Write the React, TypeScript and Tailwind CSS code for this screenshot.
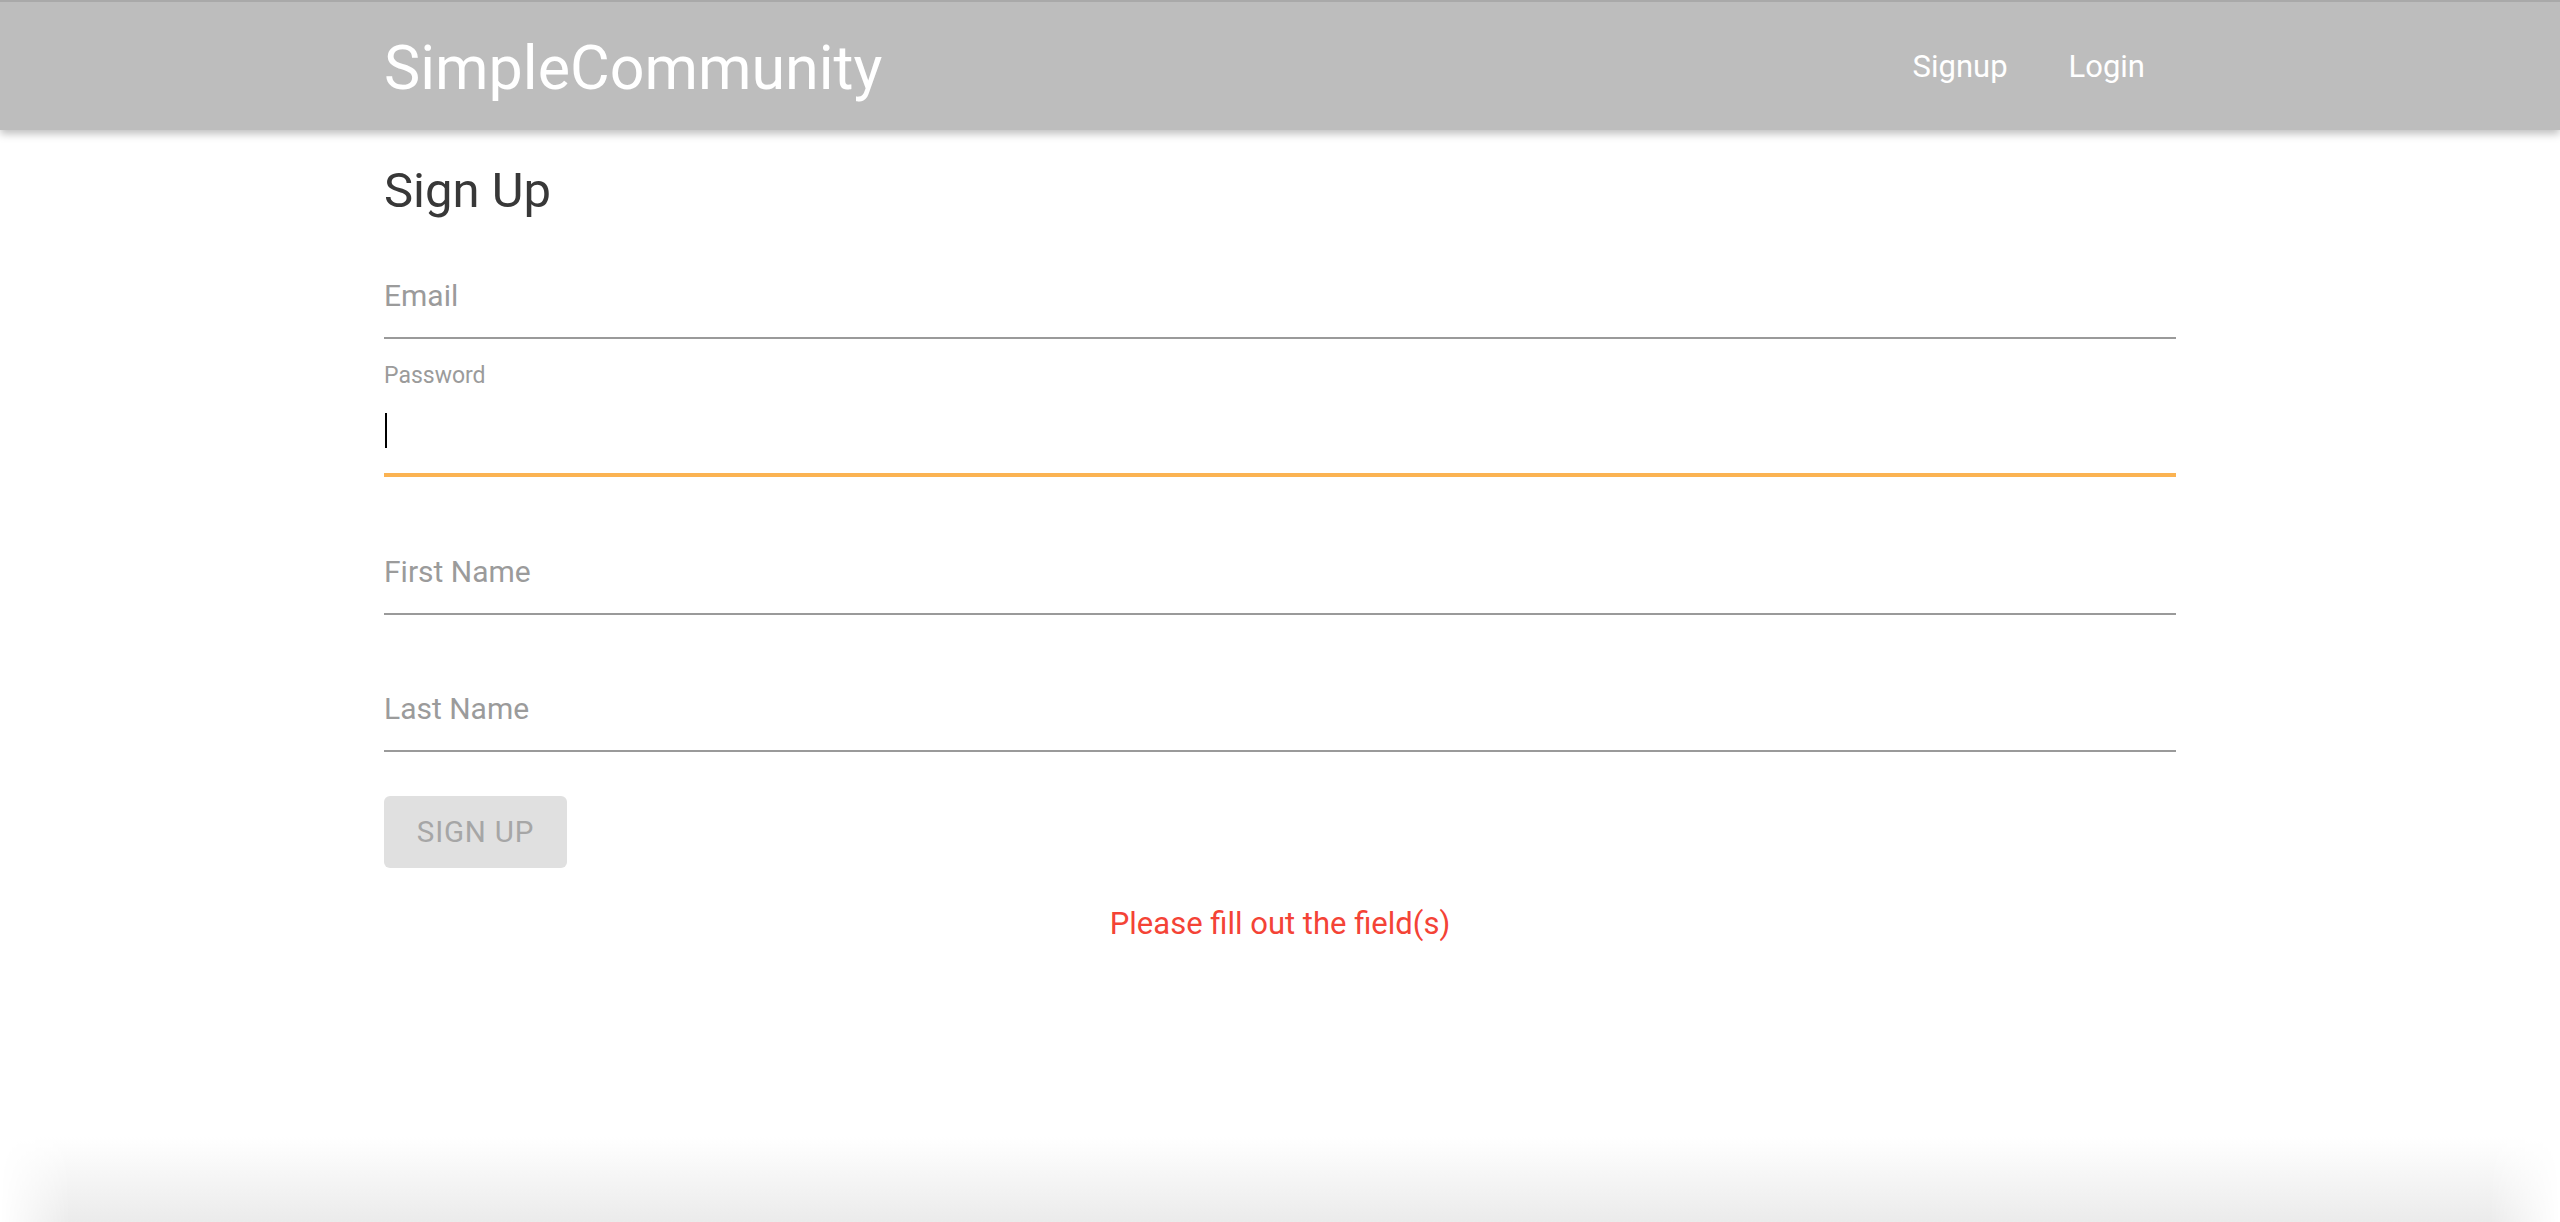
import React from "react";

const font = { fontFamily: "Roboto, 'Liberation Sans', sans-serif" };

const Field = ({ label, className }: { label: string; className: string }) => (
  <div className={`border-b-2 border-[#9a9a9a] pb-[21px] ${className}`}>
    <div className="text-[30px] leading-[40px] text-[#9b9b9b]">{label}</div>
  </div>
);

const App = () => {
  return (
    <div className="flex flex-col h-[1222px] bg-white overflow-hidden" style={font}>
      <header className="h-[130px] shrink-0 bg-[#bdbdbd] border-t-2 border-[#a9a9a9] shadow-[0_4px_8px_rgba(0,0,0,0.25)] relative z-10">
        <div className="w-[1792px] mx-auto h-full flex items-center justify-between">
          <div className="text-[61px] text-white leading-none pt-[4px]">SimpleCommunity</div>
          <nav className="flex items-center text-[31px] text-white pt-[3px]">
            <span className="px-[31px]">Signup</span>
            <span className="pl-[30px] pr-[31px]">Login</span>
          </nav>
        </div>
      </header>

      <main className="w-[1792px] mx-auto">
        <h1 className="mt-[33px] text-[49px] leading-[56px] text-[#383838]">Sign Up</h1>

        <Field label="Email" className="mt-[57px]" />

        <div className="mt-[22px] border-b-4 border-[#fbb352] pb-[25px]">
          <div className="text-[23px] leading-[30px] text-[#9b9b9b]">Password</div>
          <div className="mt-[22px] h-[35px] w-[2px] bg-black ml-[1px]" />
        </div>

        <Field label="First Name" className="mt-[75px]" />
        <Field label="Last Name" className="mt-[74px]" />

        <button className="mt-[44px] w-[183px] h-[72px] rounded-[6px] bg-[#e0e0e0] text-[29.5px] text-[#a6a6a6] tracking-[0.8px]">
          SIGN UP
        </button>

        <p className="mt-[38px] text-center text-[31px] leading-[36px] text-[#f44336]">
          Please fill out the field(s)
        </p>
      </main>

      <div className="flex-1" />
      <div className="h-[85px] shrink-0 bg-gradient-to-b from-white to-[#ebebeb] [mask-image:linear-gradient(to_right,transparent,black_70px,black_calc(100%-70px),transparent)]" />
    </div>
  );
};

export default App;
